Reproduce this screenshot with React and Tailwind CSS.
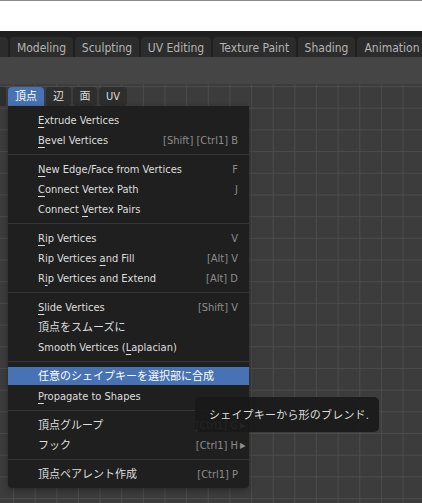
import React from "react";

const FONT = {
  fontFamily: '"DejaVu Sans Condensed", "DejaVu Sans", "Noto Sans CJK JP", sans-serif',
};

// items of the vertex menu; "u" is the index of the underlined letter
const MENU = [
  { label: "Extrude Vertices", u: 0 },
  { label: "Bevel Vertices", u: 0, key: "[Shift] [Ctrl1] B" },
  "sep",
  { label: "New Edge/Face from Vertices", u: 0, key: "F" },
  { label: "Connect Vertex Path", u: 0, key: "J" },
  { label: "Connect Vertex Pairs", u: 8 },
  "sep",
  { label: "Rip Vertices", u: 0, key: "V" },
  { label: "Rip Vertices and Fill", u: 13, key: "[Alt] V" },
  { label: "Rip Vertices and Extend", u: 1, key: "[Alt] D" },
  "sep",
  { label: "Slide Vertices", u: 0, key: "[Shift] V" },
  { label: "頂点をスムーズに" },
  { label: "Smooth Vertices (Laplacian)", u: 17 },
  "sep",
  { label: "任意のシェイプキーを選択部に合成", active: true },
  { label: "Propagate to Shapes", u: 0 },
  "sep",
  { label: "頂点グループ", key: "[Ctrl1] G", sub: true },
  { label: "フック", key: "[Ctrl1] H", sub: true },
  "sep",
  { label: "頂点ペアレント作成", key: "[Ctrl1] P" },
];

function Label({ label, u }) {
  if (u === undefined) return <span>{label}</span>;
  return (
    <span>
      {label.slice(0, u)}
      <span className="underline underline-offset-[3px] decoration-1">{label[u]}</span>
      {label.slice(u + 1)}
    </span>
  );
}

function MenuRow({ item }) {
  return (
    <div className="h-[20px] py-px">
      <div
        className={`h-[18px] flex items-center justify-between pt-[2px] pl-[30px] pr-[11px] ${
          item.active ? "bg-[#4772b3] text-white" : "text-[#dedede]"
        }`}
      >
        <Label label={item.label} u={item.u} />
        {item.key && (
          <span className="flex items-center text-[#8d8d8d]">
            {item.key}
            {item.sub && <span className="text-[8px] ml-[2px] -mr-[8px] w-[6px]">▶</span>}
          </span>
        )}
      </div>
    </div>
  );
}

const TABS = [
  { name: "Modeling", w: "w-[63px]" },
  { name: "Sculpting", w: "w-[64px]" },
  { name: "UV Editing", w: "w-[70px]" },
  { name: "Texture Paint", w: "w-[83px]" },
  { name: "Shading", w: "w-[57px]" },
  { name: "Animation", w: "w-[70px]" },
];

export default function App() {
  return (
    <div className="w-[422px] h-[503px] overflow-hidden bg-[#3c3c3c] text-[11px] flex flex-col" style={FONT}>
      {/* window chrome */}
      <div className="h-[31px] bg-white border-t border-[#8c8c8c] shrink-0"></div>

      {/* workspace tabs */}
      <div className="h-[26px] bg-[#1f1f1f] flex items-end gap-[2px] shrink-0 text-[12px] text-[#b4b4b4]">
        <div className="w-[11px] h-[20px] rounded-tr-[4px] bg-[#2c2c2c] overflow-hidden flex items-center justify-end pr-2 pt-px whitespace-nowrap">
          Layout
        </div>
        {TABS.map((t) => (
          <div
            key={t.name}
            className={`${t.w} h-[20px] rounded-t-[4px] bg-[#2c2c2c] flex items-center justify-center pt-px whitespace-nowrap shrink-0`}
          >
            {t.name}
          </div>
        ))}
      </div>

      {/* header */}
      <div className="h-[27px] bg-[#454545] shrink-0"></div>

      {/* 3d viewport */}
      <div className="relative flex-1 bg-[#3c3c3c] bg-[image:linear-gradient(to_right,#4c4c4c_1px,transparent_1px),linear-gradient(to_bottom,#4c4c4c_1px,transparent_1px)] bg-[size:21.65px_21.7px] bg-[position:13px_2px]">
        <div className="flex items-center gap-[2px] pt-[3px] h-[22px]">
          <div className="w-[6px] h-[19px] bg-[#2e2e2e] rounded-r-[3px]"></div>
          <div className="w-[36px] h-[19px] bg-[#4772b3] rounded-t-[4px] flex items-center justify-center pt-px text-white">頂点</div>
          <div className="w-[25px] h-[19px] bg-[#2e2e2e] rounded-[4px] flex items-center justify-center pt-px text-[#dcdcdc]">辺</div>
          <div className="w-[24px] h-[19px] bg-[#2e2e2e] rounded-[4px] flex items-center justify-center pt-px text-[#dcdcdc]">面</div>
          <div className="w-[28px] h-[19px] bg-[#2e2e2e] rounded-[4px] flex items-center justify-center pt-px text-[#dcdcdc]">UV</div>
        </div>

        {/* vertex menu */}
        <div className="absolute left-[8px] top-[22px] w-[241px] bg-[#1f1f1f] rounded-b-[4px] py-[4px] shadow-[0_2px_6px_rgba(0,0,0,0.35)]">
          {MENU.map((item, i) =>
            item === "sep" ? (
              <div key={i} className="h-[9px] flex items-center">
                <div className="h-px w-full bg-[#363636]"></div>
              </div>
            ) : (
              <MenuRow key={i} item={item} />
            )
          )}
        </div>

        {/* tooltip */}
        <div className="absolute left-[195px] top-[313px] w-[184px] h-[35px] rounded-[5px] bg-[#181818]/90 flex items-center pl-[14px] pt-[4px] text-[#dcdcdc] text-[11px] tracking-[0.2px]">
          シェイプキーから形のブレンド.
        </div>
      </div>
    </div>
  );
}
